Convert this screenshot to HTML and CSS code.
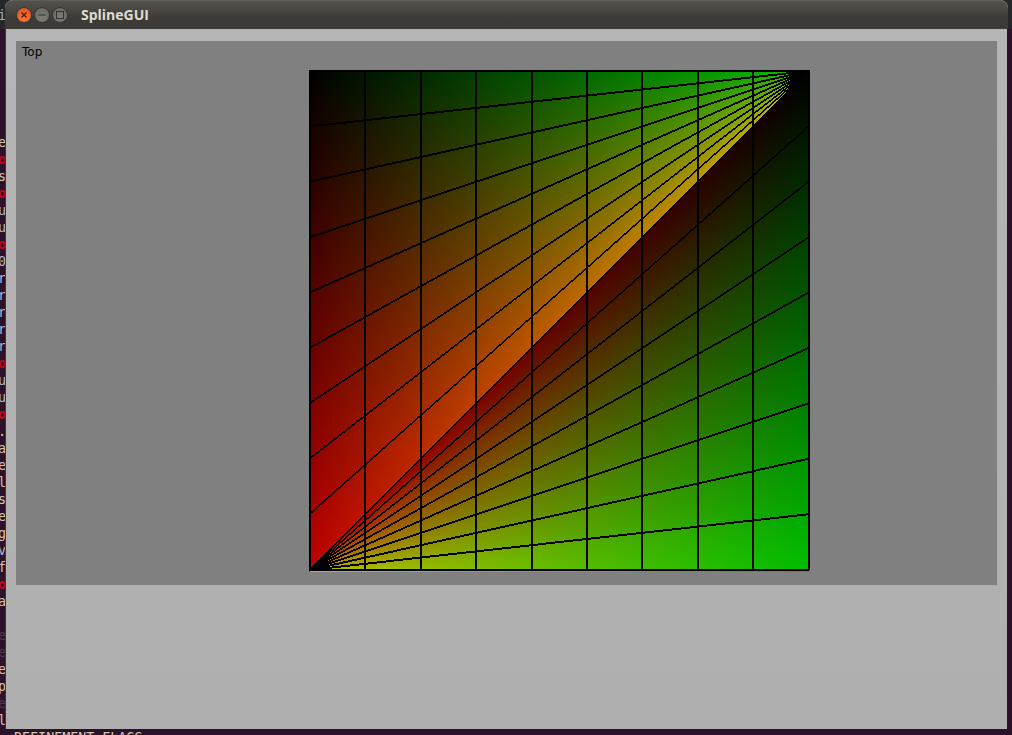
FILE: index.html
```html
<!DOCTYPE html>
<html lang="en">
<head>
<meta charset="utf-8">
<title>SplineGUI</title>
<link rel="stylesheet" href="styles.css">
</head>
<body>
<div class="panel"><span class="panel-glyph">i</span></div>
<pre class="terminal"><span class="t">e</span>
<span class="r">o</span>
<span class="t">s</span>
<span class="r">o</span>
<span class="b">u</span>
<span class="b">u</span>
<span class="r">o</span>
<span class="b">0</span>
<span class="b">r</span>
<span class="b">r</span>
<span class="b">r</span>
<span class="b">r</span>
<span class="b">r</span>
<span class="r">o</span>
<span class="b">u</span>
<span class="b">u</span>
<span class="r">o</span>
<span class="t">.</span>
<span class="t">a</span>
<span class="t">e</span>
<span class="t">l</span>
<span class="t">s</span>
<span class="t">e</span>
<span class="t">g</span>
<span class="b">v</span>
<span class="t">f</span>
<span class="r">o</span>
<span class="t">a</span>

<span class="dim">e</span>
<span class="dim">e</span>
<span class="t">e</span>
<span class="t">p</span>
<span class="dim">e</span>
<span class="t">l</span>
<span class="t">  REFINEMENT_FLAGS</span></pre>
<section class="window">
  <header class="titlebar">
    <div class="controls">
      <span class="ctl close"><svg viewBox="0 0 14 14"><path d="M4.500 4.500l5 5M9.500 4.500l-5 5"/></svg></span>
      <span class="ctl"><svg viewBox="0 0 14 14"><path d="M3.500 7h7"/></svg></span>
      <span class="ctl"><svg viewBox="0 0 14 14"><rect x="3.500" y="3.500" width="7" height="7"/></svg></span>
    </div>
    <h1 class="title">SplineGUI</h1>
  </header>
  <main class="client">
    <div class="viewport">
      <span class="view-label">Top</span>
      <canvas id="surface" class="surface" width="501" height="502"></canvas>
    </div>
  </main>
</section>
<script src="script.js"></script>
</body>
</html>
```
FILE: styles.css
```css
html, body { margin: 0; height: 100%; }
body {
  position: relative;
  width: 1012px;
  height: 735px;
  overflow: hidden;
  background: #2c1229;
}
.panel {
  height: 29px;
  background: #26272a;
  position: relative;
}
.panel-glyph {
  position: absolute;
  left: -2px;
  top: 7px;
  font: 13.333px/17px "DejaVu Sans Mono", monospace;
  color: #8fb0c4;
}
.terminal {
  position: absolute;
  left: -2px;
  top: 134px;
  margin: 0;
  font: 13.333px/17px "DejaVu Sans Mono", monospace;
  color: #cdbfa8;
}
.terminal .t { color: #d3c6ae; }
.terminal .b { color: #aebad2; }
.terminal .r { color: #b80a1a; font-weight: bold; }
.terminal .dim { color: #4d3a52; }
.window {
  position: absolute;
  left: 5px;
  top: 0;
  width: 1003px;
  height: 729px;
  display: flex;
  flex-direction: column;
  background: #b3b3b3;
  border-radius: 8px 8px 0 0;
  box-sizing: border-box;
}
.titlebar {
  height: 29px;
  flex: none;
  display: flex;
  align-items: center;
  padding-left: 11px;
  border-radius: 8px 8px 0 0;
  background: linear-gradient(#55534d, #3c3b37 60%);
  border-top: 1px solid #5f5d57;
  box-sizing: border-box;
}
.controls { display: flex; gap: 2px; }
.ctl {
  width: 16px;
  height: 16px;
  box-sizing: border-box;
  border-radius: 50%;
  background: radial-gradient(circle at 50% 70%, #7f7d77, #62615b);
  border: 1px solid #3a3935;
  display: block;
}
.ctl svg { display: block; width: 14px; height: 14px; }
.ctl path, .ctl rect { fill: none; stroke: #33322e; stroke-width: 1; }
.close { background: radial-gradient(circle at 50% 70%, #f9793b, #dc4a18); }
.close path { stroke: #5a1e06; stroke-width: 1.500; }
.title {
  margin: 0 0 0 13px;
  font: bold 14px/1 "Open Sans", sans-serif;
  color: #dfdbd2;
}
.client {
  flex: 1;
  padding: 12px 10px 144px 10px;
  display: flex;
  background: linear-gradient(#b5b5b5, #afafaf);
  border-left: 1px solid #38363a;
  border-right: 1px solid #201b1f;
}
.viewport {
  flex: 1;
  position: relative;
  display: flex;
  justify-content: flex-start;
  align-items: flex-start;
  padding: 29px 0 0 293px;
  background: #808080;
}
.view-label {
  position: absolute;
  left: 6px;
  top: 4px;
  font: 12px/14px "DejaVu Sans", sans-serif;
  color: #000;
}
.surface { display: block; }
```
FILE: script.js
```js
(function () {
  var canvas = document.getElementById('surface');
  var ctx = canvas.getContext('2d');
  var W = canvas.width, H = canvas.height;
  var S = 499, MAX = 190, N = 9, STEP = 55.4;
  var img = ctx.createImageData(W, H);
  var d = img.data;

  function put(x, y) {
    x = Math.round(x); y = Math.round(y);
    if (x < 0 || y < 0 || x >= W || y >= H) return;
    var i = (y * W + x) * 4;
    d[i] = 0; d[i + 1] = 0; d[i + 2] = 0; d[i + 3] = 255;
  }

  for (var y = 0; y < H; y++) {
    for (var x = 0; x < W; x++) {
      var u = Math.min(1, x / S), v = Math.min(1, y / S);
      var r, g, w;
      if (v < 1 - u) {
        w = v / (1 - u);
        r = w * MAX; g = u * MAX;
      } else {
        w = u > 0 ? 1 - (1 - v) / u : 0;
        w = Math.max(0, w);
        g = w * MAX; r = (1 - u) * MAX;
      }
      var i = (y * W + x) * 4;
      d[i] = r; d[i + 1] = g; d[i + 2] = 0; d[i + 3] = 255;
    }
  }

  // aliased 2px lines, like fixed-function GL lines
  function line(x0, y0, x1, y1) {
    var dx = x1 - x0, dy = y1 - y0;
    var n = Math.ceil(Math.max(Math.abs(dx), Math.abs(dy))), k, t, px, py;
    for (k = 0; k <= n; k++) {
      t = k / n; px = x0 + dx * t; py = y0 + dy * t;
      if (Math.abs(dx) >= Math.abs(dy)) { put(px, py); put(px, py + 1); }
      else { put(px, py); put(px + 1, py); }
    }
  }

  for (var k = 0; k <= N; k++) {
    var p = k === N ? S : STEP * k;
    line(p, 0, p, S);               // verticals
    line(0, p, S, 0);               // fan to top right
    line(0, S, S, p);               // fan from bottom left
  }
  line(0, 0, S, 0);
  line(0, S, S, S);
  ctx.putImageData(img, 0, 0);
})();
```
